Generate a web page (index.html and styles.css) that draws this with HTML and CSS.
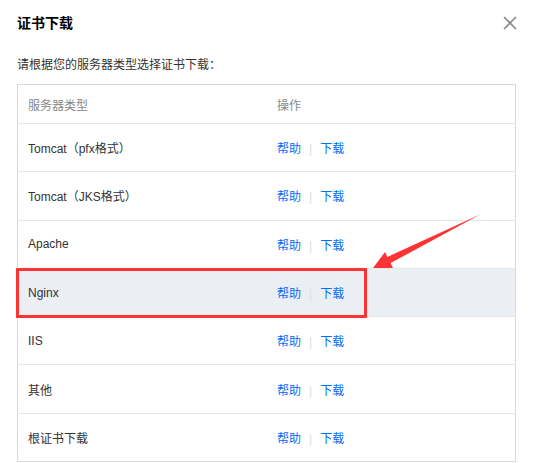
FILE: index.html
```html
<!DOCTYPE html>
<html lang="zh-CN">
<head>
    <meta charset="UTF-8">
    <title>证书下载</title>
    <link rel="stylesheet" href="styles.css">
</head>
<body>

<div class="dialog">
    <div class="dialog-head">
        <h3 class="dialog-title">证书下载</h3>
        <button class="close-btn" type="button" aria-label="关闭">
            <svg width="14" height="14" viewBox="0 0 14 14">
                <path d="M1 1L13 13M13 1L1 13" stroke="#888" stroke-width="1.6" fill="none"/>
            </svg>
        </button>
    </div>

    <p class="tip">请根据您的服务器类型选择证书下载：</p>

    <table class="cert-table">
        <thead>
            <tr>
                <th class="col-type">服务器类型</th>
                <th>操作</th>
            </tr>
        </thead>
        <tbody>
            <tr><td>Tomcat（pfx格式）</td><td><a href="#">帮助</a><span class="sep">|</span><a href="#">下载</a></td></tr>
            <tr><td>Tomcat（JKS格式）</td><td><a href="#">帮助</a><span class="sep">|</span><a href="#">下载</a></td></tr>
            <tr><td>Apache</td><td><a href="#">帮助</a><span class="sep">|</span><a href="#">下载</a></td></tr>
            <tr class="active"><td>Nginx</td><td><a href="#">帮助</a><span class="sep">|</span><a href="#">下载</a></td></tr>
            <tr><td>IIS</td><td><a href="#">帮助</a><span class="sep">|</span><a href="#">下载</a></td></tr>
            <tr><td>其他</td><td><a href="#">帮助</a><span class="sep">|</span><a href="#">下载</a></td></tr>
            <tr><td>根证书下载</td><td><a href="#">帮助</a><span class="sep">|</span><a href="#">下载</a></td></tr>
        </tbody>
    </table>
</div>

<!-- annotation drawn over the screenshot -->
<svg class="mark" width="542" height="463" viewBox="0 0 542 463">
    <rect x="17.5" y="269.5" width="348" height="47" fill="none" stroke="#f33" stroke-width="3"/>
    <polygon points="373,268 385,252 387.4,256.9 481,214 390.6,263.1 393,268" fill="#f33"/>
</svg>

</body>
</html>
```

FILE: styles.css
```css
body {
    margin: 0;
    background-color: #fff;
    font-family: "Liberation Sans", "Noto Sans CJK SC", sans-serif;
    color: #333;
}
.dialog {
    padding: 10px 26px 0 17px;
}
.dialog-head {
    display: flex;
    justify-content: space-between;
    align-items: center;
    height: 24px;
}
.dialog-title {
    margin: 0;
    font-size: 14px;
    font-weight: bold;
    color: #000;
}
.close-btn {
    border: none;
    background: none;
    padding: 0;
    margin-right: -1px;
    margin-top: 2px;
    cursor: pointer;
    display: flex;
}
.tip {
    margin: 22px 0 0;
    font-size: 12px;
    line-height: 18px;
    color: #333;
}
.cert-table {
    width: 100%;
    margin-top: 10px;
    border-collapse: collapse;
    border: 1px solid #d5d8df;
    font-size: 12px;
}
.cert-table th,
.cert-table td {
    text-align: left;
    padding: 0 10px;
    border-bottom: 1px solid #e5e7eb;
}
.cert-table th {
    height: 38px;
    font-weight: normal;
    color: #888;
}
.cert-table td {
    height: 47.3px;
    color: #333;
}
.cert-table .col-type {
    width: 229px;
}
.cert-table tr:last-child td {
    border-bottom: none;
}
.cert-table tr.active td {
    background-color: #ebeef3;
}
.cert-table a {
    color: #006eff;
    text-decoration: none;
}
.sep {
    color: #ddd;
    margin: 0 8px;
}
.mark {
    position: absolute;
    left: 0;
    top: 0;
    pointer-events: none;
}
```
